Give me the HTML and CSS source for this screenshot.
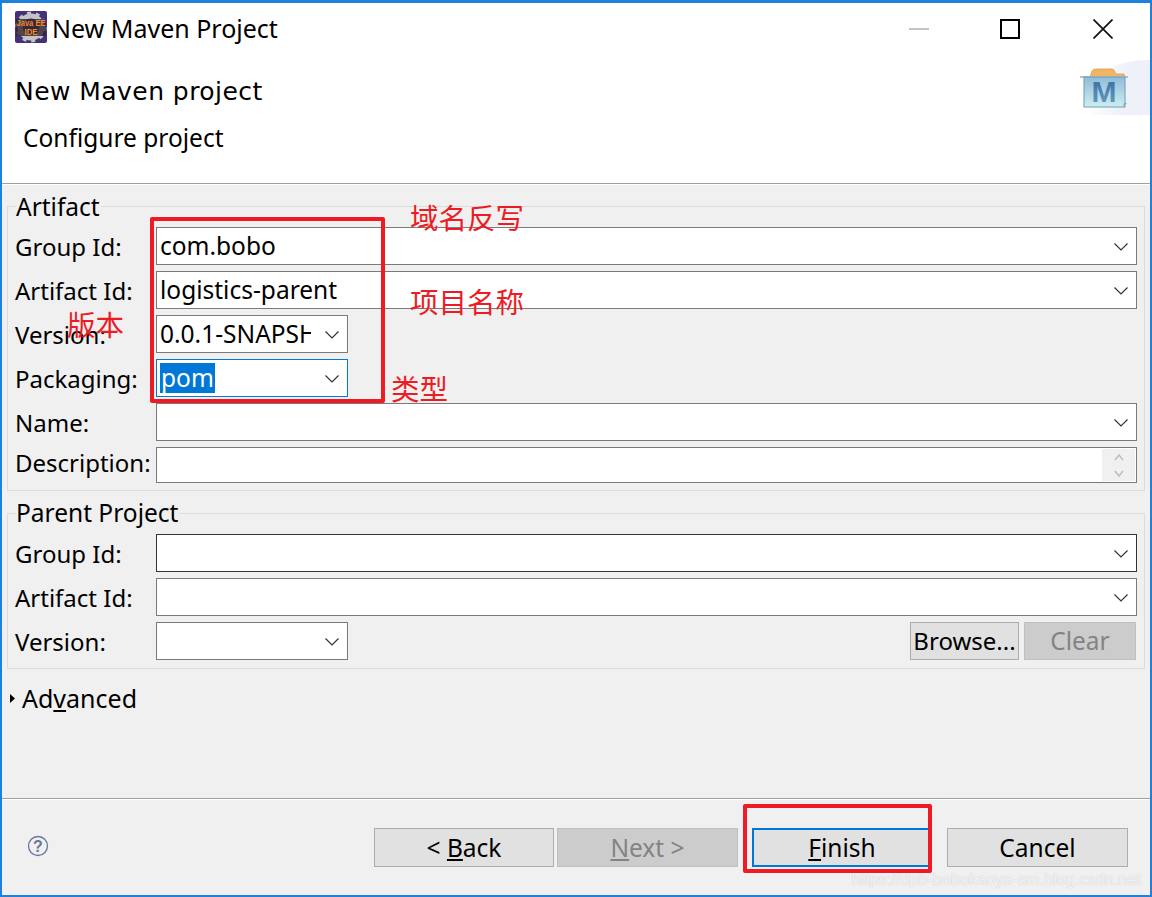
FILE: index.html
```html
<!DOCTYPE html>
<html lang="en">
<head>
<meta charset="utf-8">
<title>New Maven Project</title>
<link rel="stylesheet" href="styles.css">
</head>
<body>
<div class="window">
  <div class="titlebar">
    <svg class="app-icon" width="32" height="32" viewBox="0 0 32 32">
      <rect width="32" height="32" rx="2" fill="#46307a"/>
      <circle cx="16" cy="16" r="11" fill="none" stroke="#c4c4c4" stroke-width="5"/>
      <circle cx="16" cy="16" r="14" fill="none" stroke="#c4c4c4" stroke-width="3" stroke-dasharray="4 4.800"/>
      <rect x="1" y="8" width="30" height="17" fill="#33252f" opacity=".8"/>
      <text x="16" y="14.500" class="icon-text" textLength="29" lengthAdjust="spacingAndGlyphs">Java EE</text>
      <text x="16" y="24" class="icon-text" textLength="13" lengthAdjust="spacingAndGlyphs">IDE</text>
    </svg>
    <span class="title">New Maven Project</span>
    <div class="controls">
      <svg class="ctl-min" width="22" height="20" viewBox="0 0 22 20"><path d="M1 10h20" stroke="#c4c4c4" stroke-width="2"/></svg>
      <svg class="ctl-max" width="20" height="20" viewBox="0 0 20 20"><rect x="1" y="1" width="18" height="18" fill="none" stroke="#000" stroke-width="2"/></svg>
      <svg class="ctl-close" width="20" height="20" viewBox="0 0 20 20"><path d="M.5.5l19 19M19.500.5l-19 19" stroke="#111" stroke-width="1.700"/></svg>
    </div>
  </div>
  <header class="banner">
    <div class="banner-glow"></div>
    <svg class="maven-icon" width="50" height="44" viewBox="0 0 50 44">
      <defs>
        <linearGradient id="mavenBody" x1="0" y1="0" x2="0" y2="1">
          <stop offset="0" stop-color="#8fbcd8"/>
          <stop offset="1" stop-color="#cdeef0"/>
        </linearGradient>
        <linearGradient id="mavenM" x1="0" y1="0" x2="0" y2="1">
          <stop offset="0" stop-color="#2f6aa0"/>
          <stop offset="1" stop-color="#6e9fc2"/>
        </linearGradient>
      </defs>
      <path d="M11 12l2-6q1-2 4-2h16q2 0 3 3l1 2h8l1 3z" fill="#f2b561" stroke="#d49a4a" stroke-width=".7"/>
      <path d="M1 12h48" stroke="#b9bfc6" stroke-width="2"/>
      <rect x="5" y="12" width="41" height="30" fill="url(#mavenBody)" stroke="#6f9cb8"/>
      <path d="M44 42l4-4h-3z" fill="#9a9fae"/>
      <text x="25" y="37" class="maven-m">M</text>
    </svg>
    <div class="banner-title">New Maven project</div>
    <div class="banner-sub">Configure project</div>
  </header>
  <main class="content">
    <section class="group group-artifact">
      <div class="legend">Artifact</div>
      <div class="rows">
        <div class="row"><label>Group Id:</label><div class="field wide"><span class="value">com.bobo</span><svg class="chev" width="14" height="8" viewBox="0 0 14 8"><path d="M.5.5L7 7 13.500.5"/></svg></div></div>
        <div class="row"><label>Artifact Id:</label><div class="field wide"><span class="value">logistics-parent</span><svg class="chev" width="14" height="8" viewBox="0 0 14 8"><path d="M.5.5L7 7 13.500.5"/></svg></div></div>
        <div class="row"><label>Version:</label><div class="field narrow"><span class="value clip">0.0.1-SNAPSHOT</span><svg class="chev" width="14" height="8" viewBox="0 0 14 8"><path d="M.5.5L7 7 13.500.5"/></svg></div></div>
        <div class="row"><label>Packaging:</label><div class="field narrow focus"><span class="value selected">pom</span><svg class="chev" width="14" height="8" viewBox="0 0 14 8"><path d="M.5.5L7 7 13.500.5"/></svg></div></div>
        <div class="row"><label>Name:</label><div class="field wide"><span class="value"></span><svg class="chev" width="14" height="8" viewBox="0 0 14 8"><path d="M.5.5L7 7 13.500.5"/></svg></div></div>
        <div class="row row-desc"><label>Description:</label><div class="field wide desc"><span class="value"></span>
          <div class="spinner">
            <svg width="10" height="7" viewBox="0 0 10 7"><path d="M1 6l4-5 4 5"/></svg>
            <svg width="10" height="7" viewBox="0 0 10 7"><path d="M1 1l4 5 4-5"/></svg>
          </div></div></div>
      </div>
    </section>
    <section class="group group-parent">
      <div class="legend">Parent Project</div>
      <div class="rows">
        <div class="row"><label>Group Id:</label><div class="field wide dark"><span class="value"></span><svg class="chev" width="14" height="8" viewBox="0 0 14 8"><path d="M.5.5L7 7 13.500.5"/></svg></div></div>
        <div class="row"><label>Artifact Id:</label><div class="field wide"><span class="value"></span><svg class="chev" width="14" height="8" viewBox="0 0 14 8"><path d="M.5.5L7 7 13.500.5"/></svg></div></div>
        <div class="row"><label>Version:</label><div class="field narrow"><span class="value"></span><svg class="chev" width="14" height="8" viewBox="0 0 14 8"><path d="M.5.5L7 7 13.500.5"/></svg></div>
          <div class="row-actions"><button class="btn btn-browse">Browse...</button><button class="btn btn-clear" disabled>Clear</button></div></div>
      </div>
    </section>
    <div class="advanced"><svg class="twisty" width="5" height="9" viewBox="0 0 5 9"><path d="M0 0l5 4.500L0 9z"/></svg><span>Ad<u>v</u>anced</span></div>
  </main>
  <footer class="footer">
    <svg class="help" width="22" height="22" viewBox="0 0 22 22">
      <circle cx="11" cy="11" r="9.500" fill="none" stroke="#66779a" stroke-width="1.300"/>
      <text x="11" y="16.500" class="help-q">?</text>
    </svg>
    <div class="buttons">
      <button class="btn btn-nav">&lt; <u>B</u>ack</button>
      <button class="btn btn-nav btn-next" disabled><u>N</u>ext &gt;</button>
      <button class="btn btn-nav btn-finish"><u>F</u>inish</button>
      <button class="btn btn-nav btn-cancel">Cancel</button>
    </div>
  </footer>
  <div class="mark mark-fields"></div>
  <div class="mark mark-finish"></div>
  <div class="note note-domain">域名反写</div>
  <div class="note note-name">项目名称</div>
  <div class="note note-version">版本</div>
  <div class="note note-type">类型</div>
  <div class="watermark">https://dpb-bobokaoya-sm.blog.csdn.net</div>
</div>
</body>
</html>
```
FILE: styles.css
```css
* { box-sizing: border-box; }
html, body { margin: 0; padding: 0; }
body {
  width: 1152px;
  height: 897px;
  overflow: hidden;
  font-family: "Noto Sans", "Open Sans", sans-serif;
  font-size: 24.500px;
  color: #000;
}
.window {
  position: relative;
  width: 1152px;
  height: 897px;
  border: 2px solid #1e82dc;
  border-top-width: 3px;
  background: #f0f0f0;
  display: flex;
  flex-direction: column;
}
.titlebar {
  height: 50px;
  flex: none;
  background: #fff;
  display: flex;
  align-items: center;
  padding-left: 13px;
  position: relative;
}
.app-icon { flex: none; margin-top: -2px; }
.icon-text { font: 700 8.500px "Liberation Sans", sans-serif; fill: #f08a24; text-anchor: middle; }
.title { margin-left: 5px; line-height: 34px; font-size: 25px; margin-top: -1px; }
.controls { position: absolute; top: 0; left: 0; }
.controls svg { position: absolute; }
.ctl-min { left: 906px; top: 16px; }
.ctl-max { left: 998px; top: 16px; }
.ctl-close { left: 1091px; top: 16px; }
.banner {
  height: 131px;
  flex: none;
  background: #fff;
  border-bottom: 1px solid #a0a0a0;
  box-shadow: 0 1px 0 #fff;
  position: relative;
  overflow: hidden;
}
.banner-glow {
  position: absolute;
  right: 0;
  top: 7px;
  width: 60px;
  height: 55px;
  background: linear-gradient(100deg, #fff 10%, #eef1fa 55%);
  border-top-left-radius: 60px 30px;
}
.maven-icon { position: absolute; left: 1077px; top: 12px; }
.maven-m { font: 700 30px "Liberation Sans", sans-serif; fill: url(#mavenM); text-anchor: middle; }
.banner-title {
  font-family: "DejaVu Sans", sans-serif;
  font-size: 25px;
  line-height: 30px;
  padding: 24px 0 0 13px;
  letter-spacing: .45px;
}
.banner-sub { line-height: 34px; padding: 14px 0 0 21px; }
.content { flex: 1; padding: 0 5px; min-height: 0; }
.group {
  border: 1px solid #dcdcdc;
  padding: 0 7px 0 8px;
  position: relative;
}
.group-artifact { margin-top: 22px; height: 285px; }
.group-parent { margin-top: 22px; height: 156px; }
.legend {
  position: absolute;
  left: 8px;
  top: -16px;
  line-height: 32px;
  padding-right: 1px;
  background: #f0f0f0;
}
.group-parent .legend { top: -17px; }
.rows { display: flex; flex-direction: column; gap: 6px; padding-top: 20px; }
.row { display: flex; align-items: center; height: 38px; }
.row-desc { height: 36px; }
.row label { width: 140px; flex: none; line-height: 34px; font-size: 24px; margin-left: -1px; margin-right: 1px; margin-top: 1px; }
.row-desc label { margin-top: 0; margin-bottom: 5px; }
.field {
  height: 100%;
  background: #fff;
  border: 1px solid #7a7a7a;
  display: flex;
  align-items: center;
  position: relative;
  padding-left: 3px;
}
.wide { flex: 1; }
.narrow { width: 192px; flex: none; }
.dark { border-color: #333; }
.focus { border-color: #0078d7; }
.value { line-height: 34px; white-space: nowrap; flex: 1; min-width: 0; }
.clip { overflow: hidden; flex: none; width: 151px; }
.selected { flex: none; background: #0078d7; color: #fff; padding: 0 1px 0 1px; line-height: 30px; }
.chev {
  position: absolute;
  right: 8px;
  top: 15px;
  fill: none;
  stroke: #333;
  stroke-width: 1.200;
}
.spinner {
  position: absolute;
  right: 1px;
  top: 1px;
  bottom: 1px;
  width: 33px;
  background: #f0f0f0;
  display: flex;
  flex-direction: column;
  align-items: center;
  justify-content: center;
  gap: 9px;
}
.spinner svg { fill: none; stroke: #bdbdbd; stroke-width: 1.500; }
.row-actions { margin-left: auto; display: flex; gap: 5px; height: 100%; margin-right: 1px; }
.btn {
  font: inherit;
  color: #000;
  background: #e1e1e1;
  border: 1px solid #adadad;
  padding: 0;
  line-height: 34px;
}
.btn:disabled { background: #ccc; border-color: #bfbfbf; color: #838383; }
.btn-browse { width: 109px; font-size: 24px; }
.btn-clear { width: 112px; }
.advanced {
  display: flex;
  align-items: center;
  margin: 12px 0 0 2px;
  line-height: 34px;
  font-size: 25px;
}
.twisty { flex: none; margin: 1px 7px 0 1px; }
.footer {
  height: 97px;
  flex: none;
  border-top: 1px solid #a0a0a0;
  box-shadow: inset 0 1px 0 #fff;
  display: flex;
  position: relative;
}
.help { position: absolute; left: 25px; top: 36px; }
.help-q { font: 700 16px "Liberation Sans", sans-serif; fill: #66779a; text-anchor: middle; }
.buttons { margin-left: 372px; padding-top: 29px; display: flex; height: 69px; }
.btn-nav { width: 180px; height: 39px; flex: none; }
.btn-next { margin-left: 3px; width: 181px; }
.btn-finish { margin-left: 14px; border: 2px solid #0078d7; }
.btn-cancel { margin-left: 15px; width: 181px; }
.mark { position: absolute; border: 4px solid #ed1c24; border-radius: 2px; pointer-events: none; }
.mark-fields { left: 148px; top: 214px; width: 235px; height: 186px; }
.mark-finish { left: 741px; top: 801px; width: 189px; height: 69px; }
.note {
  position: absolute;
  color: #ed1c24;
  font-family: "Noto Sans CJK SC", sans-serif;
  font-size: 28.500px;
  line-height: 36px;
  white-space: nowrap;
}
.note-domain { left: 408px; top: 196px; }
.note-name { left: 408px; top: 280px; }
.note-version { left: 65px; top: 303px; }
.note-type { left: 389px; top: 367px; }
.watermark {
  position: absolute;
  right: 9px;
  top: 865px;
  font-family: "Liberation Sans", sans-serif;
  font-size: 16.300px;
  line-height: 22px;
  color: rgba(255,255,255,.8);
  text-shadow: 0 0 1px rgba(150,150,150,.6);
  white-space: nowrap;
}
```
